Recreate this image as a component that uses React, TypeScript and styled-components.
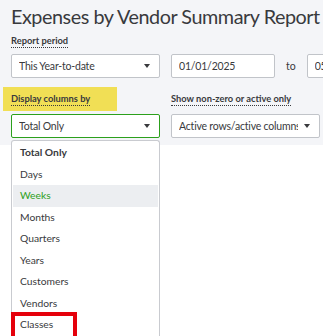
import styled, { createGlobalStyle } from "styled-components"

const GlobalStyle = createGlobalStyle`
  html, body {
    margin: 0;
    padding: 0;
    background: #ffffff;
    overflow: hidden;
  }
  body {
    font-family: Lato, "Liberation Sans", sans-serif;
    color: #393a3d;
  }
`

const Page = styled.div`
  position: relative;
  width: 323px;
  height: 336px;
  overflow: hidden;
`

const Header = styled.div`
  background: #f4f5f8;
  padding: 2px 0 7px 11px;
  display: flex;
  flex-direction: column;
`

const Title = styled.h1`
  margin: 0;
  font-size: 19.8px;
  line-height: 28px;
  font-weight: 400;
  white-space: nowrap;
  letter-spacing: -0.45px;
`

const FieldLabel = styled.span<{ $top?: number }>`
  align-self: flex-start;
  margin-top: ${(p) => p.$top ?? 0}px;
  font-size: 9.3px;
  line-height: 12px;
  font-weight: 700;
  border-bottom: 1px dotted #393a3d;
  white-space: nowrap;
`

const Grid = styled.div<{ $top: number }>`
  display: grid;
  grid-template-columns: 149px 149px;
  column-gap: 11px;
  align-items: end;
  margin-top: ${(p) => p.$top}px;
`

const Highlight = styled.div`
  justify-self: start;
  margin-left: -8px;
  padding: 6px 8px 5px;
  width: 98px;
  background: #f1df55;
  display: flex;
`

const LabelCell = styled.div`
  display: flex;
  padding-bottom: 5px;
`

const Controls = styled.div<{ $top: number }>`
  display: flex;
  align-items: center;
  margin-top: ${(p) => p.$top}px;
  gap: 11px;
  white-space: nowrap;
`

const Box = styled.div<{ $width: number; $active?: boolean }>`
  box-sizing: border-box;
  flex: none;
  width: ${(p) => p.$width}px;
  height: 24px;
  background: #ffffff;
  border: 1px solid ${(p) => (p.$active ? "#2ca01c" : "#c1c4c9")};
  border-radius: 2px;
  display: flex;
  align-items: center;
  padding: 0 9px 0 7px;
  font-size: 10.5px;
  letter-spacing: -0.2px;
  overflow: hidden;
`

const BoxText = styled.span`
  flex: 1;
  overflow: hidden;
  white-space: nowrap;
`

const Caret = styled.span`
  flex: none;
  width: 0;
  height: 0;
  margin-left: 6px;
  border-left: 3.5px solid transparent;
  border-right: 3.5px solid transparent;
  border-top: 4px solid #393a3d;
`

const ToText = styled.span`
  font-size: 10.5px;
`

const Menu = styled.ul`
  position: absolute;
  top: 140px;
  left: 11px;
  width: 149px;
  box-sizing: border-box;
  margin: 0;
  padding: 1px 0 0;
  list-style: none;
  background: #ffffff;
  border: 1px solid #c9cbd0;
  border-bottom: none;
  border-radius: 3px 3px 0 0;
`

const MenuItem = styled.li<{ $bold?: boolean; $hover?: boolean }>`
  height: 21.5px;
  line-height: 21.5px;
  padding-left: 7px;
  margin: 0 1px;
  font-size: 10.3px;
  font-weight: ${(p) => (p.$bold ? 700 : 400)};
  color: ${(p) => (p.$hover ? "#2ca01c" : "#393a3d")};
  background: ${(p) => (p.$hover ? "#eceef1" : "transparent")};
`

const Marker = styled.div`
  position: absolute;
  left: 11px;
  top: 312px;
  width: 66px;
  height: 28px;
  box-sizing: border-box;
  border: 4px solid #e5000b;
`

const items = ["Total Only", "Days", "Weeks", "Months", "Quarters", "Years", "Customers", "Vendors", "Classes"]

export default function App() {
  return (
    <Page>
      <GlobalStyle />
      <Header>
        <Title>Expenses by Vendor Summary Report</Title>
        <FieldLabel $top={5}>Report period</FieldLabel>
        <Controls $top={6}>
          <Box $width={149}>
            <BoxText>This Year-to-date</BoxText>
            <Caret />
          </Box>
          <Box $width={104}>
            <BoxText>01/01/2025</BoxText>
          </Box>
          <ToText>to</ToText>
          <Box $width={80}>
            <BoxText>05/31/2025</BoxText>
          </Box>
        </Controls>
        <Grid $top={9}>
          <Highlight>
            <FieldLabel>Display columns by</FieldLabel>
          </Highlight>
          <LabelCell>
            <FieldLabel>Show non-zero or active only</FieldLabel>
          </LabelCell>
        </Grid>
        <Controls $top={3}>
          <Box $width={149} $active>
            <BoxText>Total Only</BoxText>
            <Caret />
          </Box>
          <Box $width={149}>
            <BoxText>Active rows/active columns</BoxText>
            <Caret />
          </Box>
        </Controls>
      </Header>
      <Menu>
        {items.map((item, index) => (
          <MenuItem key={item} $bold={index === 0} $hover={item === "Weeks"}>
            {item}
          </MenuItem>
        ))}
      </Menu>
      <Marker />
    </Page>
  )
}
